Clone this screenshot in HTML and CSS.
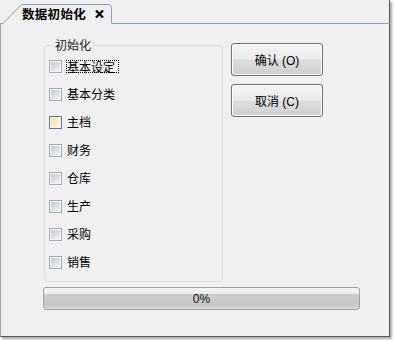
FILE: index.html
```html
<!DOCTYPE html>
<html>
<head>
<meta charset="utf-8">
<link rel="stylesheet" href="styles.css">
</head>
<body>
<div class="window">
  <div class="tabstrip">
    <svg class="tabline" width="390" height="24" viewBox="0 0 390 24">
      <path d="M0 23.5 H3 L21.5 4.5 H108 Q111.5 4.5 111.5 8 V23.5 H390" fill="none" stroke="#8ea3bd" stroke-width="1"/>
    </svg>
    <div class="tab">
      <span class="tab-title">数据初始化</span>
      <svg class="close" width="9" height="8" viewBox="0 0 9 8">
        <path d="M1 0.5 L8 7.5 M8 0.5 L1 7.5" stroke="#000" stroke-width="2.2" fill="none"/>
      </svg>
    </div>
  </div>
  <div class="panel">
    <div class="main">
      <fieldset class="group">
        <legend>初始化</legend>
        <div class="row"><span class="box"></span><span class="text focus">基本设定</span></div>
        <div class="row"><span class="box"></span><span class="text">基本分类</span></div>
        <div class="row"><span class="box hover"></span><span class="text">主档</span></div>
        <div class="row"><span class="box"></span><span class="text">财务</span></div>
        <div class="row"><span class="box"></span><span class="text">仓库</span></div>
        <div class="row"><span class="box"></span><span class="text">生产</span></div>
        <div class="row"><span class="box"></span><span class="text">采购</span></div>
        <div class="row"><span class="box"></span><span class="text">销售</span></div>
      </fieldset>
      <div class="buttons">
        <button class="btn">确认 (O)</button>
        <button class="btn">取消 (C)</button>
      </div>
    </div>
    <div class="progress"><span>0%</span></div>
  </div>
</div>
</body>
</html>
```
FILE: styles.css
```css
html, body {
  margin: 0;
  padding: 0;
  background: #ffffff;
}
body {
  width: 394px;
  height: 341px;
  overflow: hidden;
  font-family: "Liberation Sans", "Noto Sans CJK SC", sans-serif;
  font-size: 12px;
  color: #000;
}
.window {
  width: 390px;
  height: 337px;
  box-sizing: border-box;
  background: #f0f0f0;
  border-right: 1px solid #5c5c5c;
  box-shadow: 2px 2px 2px rgba(0, 0, 0, 0.35);
  display: flex;
  flex-direction: column;
}
.tabstrip {
  position: relative;
  height: 24px;
  flex: none;
}
.tabline {
  position: absolute;
  left: 0;
  top: 0;
}
.tab {
  position: relative;
  display: flex;
  align-items: center;
  height: 20px;
  padding: 4px 0 0 22px;
  width: 90px;
}
.tab-title {
  font-family: "Noto Sans CJK SC", sans-serif;
  font-weight: bold;
  font-size: 12.5px;
  line-height: 14px;
  letter-spacing: 0.3px;
}
.close {
  margin-left: 9px;
}
.panel {
  flex: 1;
  border-left: 1px solid #a3a3a3;
  border-bottom: 1px solid #5c5c5c;
  padding-left: 43px;
}
.main {
  display: flex;
  align-items: flex-start;
  margin-top: 14px;
}
.group {
  margin: 0;
  width: 179px;
  box-sizing: border-box;
  padding: 0 0 5px 4px;
  border: 1px solid #d3dde6;
  border-radius: 4px;
  min-width: 0;
}
.group legend {
  font-family: "Noto Sans CJK SC", sans-serif;
  font-size: 12px;
  line-height: 14px;
  margin-left: 4px;
  padding: 0 2px;
  color: #1a1a1a;
}
.row {
  height: 28px;
  display: flex;
  align-items: center;
  gap: 5px;
}
.box {
  width: 13px;
  height: 13px;
  box-sizing: border-box;
  border: 1px solid #9eafc4;
  box-shadow: inset 0 0 0 1px #f3f3f3;
  background: linear-gradient(135deg, #c4c4c4, #f6f6f6);
  flex: none;
}
.box.hover {
  border-color: #5579ad;
  box-shadow: inset 0 0 0 1px #fff4d8;
  background: linear-gradient(135deg, #f9dc99, #fff9ec);
}
.text {
  font-family: "Noto Sans CJK SC", sans-serif;
  font-size: 12px;
  line-height: 14px;
}
.text.focus {
  border: 1px dotted #000;
  line-height: 11px;
  padding: 0 3px 0 0;
  margin-left: -1px;
}
.buttons {
  display: flex;
  flex-direction: column;
  gap: 8px;
  margin: 5px 0 0 8px;
}
.btn {
  width: 92px;
  height: 33px;
  box-sizing: border-box;
  border: 1px solid #707070;
  border-radius: 3px;
  background: linear-gradient(#f3f3f3 0%, #ebebeb 48%, #dddddd 52%, #cfcfcf 100%);
  box-shadow: inset 0 0 0 1px #fbfbfb;
  font-family: "Liberation Sans", "Noto Sans CJK SC", sans-serif;
  font-size: 12px;
  color: #000;
  padding: 0;
  margin: 0;
}
.progress {
  margin: 5px 0 0 -1px;
  width: 317px;
  height: 23px;
  box-sizing: border-box;
  border: 1px solid #a2a2a2;
  border-radius: 3px;
  background: linear-gradient(#f5f5f5 0%, #ededed 26%, #cdcdcd 30%, #c6c6c6 80%, #d6d6d6 100%);
  display: flex;
  align-items: center;
  justify-content: center;
  font-size: 12px;
  color: #111;
}
```
